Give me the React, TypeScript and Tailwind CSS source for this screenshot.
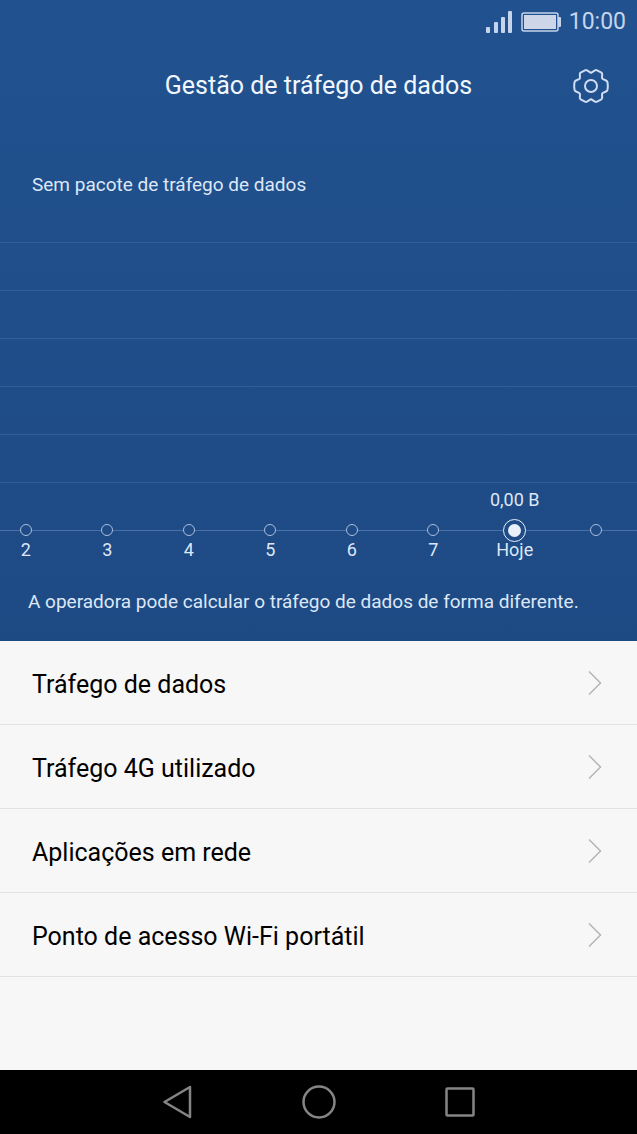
const gridLines = [1, 2, 3, 4, 5, 6];

interface Day {
  label: string;
  usage?: string;
  today?: boolean;
}

const days: Day[] = [
  { label: '2' },
  { label: '3' },
  { label: '4' },
  { label: '5' },
  { label: '6' },
  { label: '7' },
  { label: 'Hoje', usage: '0,00 B', today: true },
  { label: '' },
];

const menuItems = [
  'Tráfego de dados',
  'Tráfego 4G utilizado',
  'Aplicações em rede',
  'Ponto de acesso Wi-Fi portátil',
];

function StatusBar() {
  return (
    <div className="flex h-11 items-center justify-end gap-2 pr-[11px] text-[#c6d4ec]">
      <svg width="28" height="22" viewBox="0 0 28 22" fill="currentColor" aria-hidden="true">
        <rect x="1" y="16" width="4" height="6" rx="1" />
        <rect x="9" y="11" width="4" height="11" rx="1" />
        <rect x="16" y="6" width="4" height="16" rx="1" />
        <rect x="23" y="0" width="4" height="22" rx="1" />
      </svg>
      <svg width="40" height="20" viewBox="0 0 40 20" aria-hidden="true">
        <rect x="1" y="1" width="36" height="18" rx="2" fill="none" stroke="currentColor" strokeWidth="1.5" />
        <rect x="3" y="3" width="32" height="14" fill="#ccd6e8" />
        <rect x="37" y="5" width="3" height="10" rx="1" fill="currentColor" />
      </svg>
      <span className="text-[23px] leading-8">10:00</span>
    </div>
  );
}

function GearIcon() {
  return (
    <svg width="40" height="40" viewBox="-20 -20 40 40" fill="none" stroke="currentColor" strokeWidth="2" strokeLinejoin="round" aria-hidden="true">
      <path d="M0 -13.2 L4 -15.700 Q5 -16.200 6 -15.700 L10 -13.600 Q11.200 -13 11.200 -11.800 L11 -8.500 Q11 -7.400 12 -6.800 L15 -5.500 Q16.200 -5 16.500 -3.800 Q17.200 0 16.500 3.800 Q16.200 5 15 5.500 L12 6.800 Q11 7.400 11 8.500 L11.200 11.800 Q11.200 13 10 13.600 L6 15.700 Q5 16.200 4 15.700 L0 13.200 L-4 15.700 Q-5 16.200 -6 15.700 L-10 13.600 Q-11.200 13 -11.200 11.800 L-11 8.500 Q-11 7.400 -12 6.800 L-15 5.500 Q-16.200 5 -16.500 3.800 Q-17.200 0 -16.500 -3.800 Q-16.200 -5 -15 -5.500 L-12 -6.800 Q-11 -7.400 -11 -8.500 L-11.200 -11.800 Q-11.200 -13 -10 -13.600 L-6 -15.700 Q-5 -16.200 -4 -15.700 Z" />
      <circle r="6" />
    </svg>
  );
}

function UsageChart() {
  return (
    <div className="overflow-hidden">
      {gridLines.map((line) => (
        <div key={line} className="h-12 border-t border-[#315d98]" />
      ))}
      <div className="-mt-12 -ml-[15px] grid grid-cols-8 text-center text-lg leading-6 text-[#dde7f7]">
        {days.map((day, i) => (
          <div key={i}>
            <div className="mt-[6px] h-6">{day.usage}</div>
            <div className="flex h-9 items-center">
              <div className="h-px flex-1 bg-[#4a71a8]" />
              {day.today ? (
                <div className="flex size-[23px] items-center justify-center rounded-full border border-[#eaf0fa]">
                  <div className="size-[13px] rounded-full bg-[#eaf0fa]" />
                </div>
              ) : (
                <div className="size-3 rounded-full border border-[#a9bedd]" />
              )}
              <div className="h-px flex-1 bg-[#4a71a8]" />
            </div>
            <div className="-mt-[10px] h-6">{day.label}</div>
          </div>
        ))}
      </div>
    </div>
  );
}

export default function App() {
  return (
    <div className="flex min-h-screen flex-col bg-[#f7f7f7] font-['Roboto',sans-serif]">
      <header className="bg-linear-to-b from-[#21528f] to-[#1e4a84] pb-[26px]">
        <StatusBar />
        <div className="grid h-[84px] grid-cols-[48px_1fr_48px] items-center px-[22px]">
          <h1 className="col-start-2 text-center text-[25px] leading-8 text-[#f2f7ff]">
            Gestão de tráfego de dados
          </h1>
          <button type="button" aria-label="Definições" className="flex items-center justify-center text-[#cfdcf2]">
            <GearIcon />
          </button>
        </div>
        <p className="mt-11 mb-11 px-8 text-[19px] leading-[26px] text-[#dde7f7]">Sem pacote de tráfego de dados</p>
        <UsageChart />
        <p className="mt-[27px] px-7 text-[19px] leading-[26px] text-[#dde7f7]">
          A operadora pode calcular o tráfego de dados de forma diferente.
        </p>
      </header>

      <main className="flex-1">
        {menuItems.map((item) => (
          <button
            key={item}
            type="button"
            className="flex h-[84px] w-full items-center justify-between border-b border-[#e3e3e3] pr-[35px] pl-8 text-left text-[25px] leading-8 text-black"
          >
            <span className="pt-1">{item}</span>
            <svg width="14" height="24" viewBox="0 0 14 24" fill="none" stroke="#b4b4b4" strokeWidth="1.5" aria-hidden="true">
              <path d="M1 0.500 L12.500 12 L1 23.500" />
            </svg>
          </button>
        ))}
      </main>

      {/* Android navigation keys */}
      <nav className="flex h-16 justify-center bg-black text-[#858585]">
        <button type="button" aria-label="Voltar" className="flex w-[141px] items-center justify-center">
          <svg width="30" height="34" viewBox="0 0 30 34" fill="none" stroke="currentColor" strokeWidth="2.5" strokeLinejoin="round">
            <path d="M27 2 V32 L1.500 17 Z" />
          </svg>
        </button>
        <button type="button" aria-label="Início" className="flex w-[141px] items-center justify-center">
          <svg width="34" height="34" viewBox="0 0 34 34" fill="none" stroke="currentColor" strokeWidth="2.5">
            <circle cx="17" cy="17" r="15.500" />
          </svg>
        </button>
        <button type="button" aria-label="Recentes" className="flex w-[141px] items-center justify-center">
          <svg width="30" height="30" viewBox="0 0 30 30" fill="none" stroke="currentColor" strokeWidth="2.5">
            <rect x="1.500" y="1.500" width="27" height="27" rx="1" />
          </svg>
        </button>
      </nav>
    </div>
  );
}
